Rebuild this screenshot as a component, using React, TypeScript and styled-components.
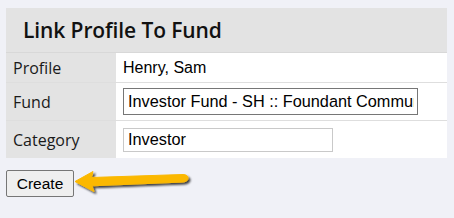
import * as React from 'react'
import styled, { createGlobalStyle } from 'styled-components'

const GlobalStyle = createGlobalStyle`
  html, body {
    margin: 0;
    padding: 0;
    background: #f0f1f7;
  }
`

const Page = styled.div`
  padding: 8px 7px 0 6px;
  font-family: 'Liberation Sans', Arial, sans-serif;
`

const Panel = styled.div`
  width: 441px;
  background: #ffffff;
`

const PanelHeader = styled.h2`
  margin: 0;
  height: 45px;
  box-sizing: border-box;
  padding: 0 0 0 17px;
  display: flex;
  align-items: center;
  background: #e3e3e3;
  border-bottom: 1px solid #d8d8d8;
  font-family: 'Open Sans', 'Noto Sans', sans-serif;
  font-weight: 600;
  font-size: 21px;
  letter-spacing: -0.1px;
  color: #111;
`

const Row = styled.div<{ $height: number; $last?: boolean }>`
  display: grid;
  grid-template-columns: 110px 1fr;
  height: ${({ $height }) => $height}px;
  box-sizing: border-box;
  border-bottom: ${({ $last }) => ($last ? 'none' : '1px solid #dedede')};
`

const Label = styled.div`
  background: #e3e3e3;
  display: flex;
  align-items: center;
  padding-left: 7px;
  font-family: 'Open Sans', 'Noto Sans', sans-serif;
  font-size: 16px;
  color: #1a1a1a;
`

const Value = styled.div`
  display: flex;
  align-items: center;
  padding-left: 7px;
  font-size: 16px;
  color: #000;
`

const TextInput = styled.input<{ $width: number; $height: number; $light?: boolean }>`
  width: ${({ $width }) => $width}px;
  height: ${({ $height }) => $height}px;
  box-sizing: border-box;
  margin: 0;
  padding: 0 3px 0 4px;
  border: 1px solid ${({ $light }) => ($light ? '#c9c9c9' : '#767676')};
  border-radius: 0;
  font-family: 'Liberation Sans', Arial, sans-serif;
  font-size: 16.3px;
  color: #000;
  background: #fff;
  outline: none;
`

const Actions = styled.div`
  display: flex;
  align-items: center;
  margin-top: 12px;
`

const Button = styled.button`
  width: 68px;
  height: 27px;
  box-sizing: border-box;
  margin: 0;
  padding: 0;
  background: #efefef;
  border: 1px solid #767676;
  border-radius: 2px;
  font-family: 'Liberation Sans', Arial, sans-serif;
  font-size: 15.5px;
  color: #000;
`

const Arrow = styled.svg`
  display: block;
  margin-top: -6px;
`

function PointerArrow() {
  return (
    <Arrow width="120" height="30" viewBox="0 0 120 30">
      <defs>
        <filter id="sh" x="-10%" y="-40%" width="130%" height="180%">
          <feGaussianBlur in="SourceAlpha" stdDeviation="1.2" />
          <feOffset dx="2" dy="2" result="b" />
          <feComponentTransfer>
            <feFuncA type="linear" slope="0.75" />
          </feComponentTransfer>
          <feMerge>
            <feMergeNode />
            <feMergeNode in="SourceGraphic" />
          </feMerge>
        </filter>
      </defs>
      <path
        d="M1 15.5 L19 5.5 L17.5 11.5 L109 8.5 Q114 8.8 114 12 Q114 15.5 109 16 L18 19.8 L20 25.5 Z"
        fill="#fbb800"
        stroke="#fbb800"
        strokeWidth="1"
        strokeLinejoin="round"
        filter="url(#sh)"
      />
    </Arrow>
  )
}

export default function App() {
  return (
    <>
      <GlobalStyle />
      <Page>
        <Panel>
          <PanelHeader>Link Profile To Fund</PanelHeader>
          <Row $height={30}>
            <Label>Profile</Label>
            <Value>Henry, Sam</Value>
          </Row>
          <Row $height={38}>
            <Label>Fund</Label>
            <Value>
              <TextInput
                $width={295}
                $height={27}
                readOnly
                value="Investor Fund - SH :: Foundant Community Foundation"
              />
            </Value>
          </Row>
          <Row $height={37} $last>
            <Label>Category</Label>
            <Value>
              <TextInput $width={210} $height={24} $light readOnly value="Investor" />
            </Value>
          </Row>
        </Panel>
        <Actions>
          <Button>Create</Button>
          <PointerArrow />
        </Actions>
      </Page>
    </>
  )
}
